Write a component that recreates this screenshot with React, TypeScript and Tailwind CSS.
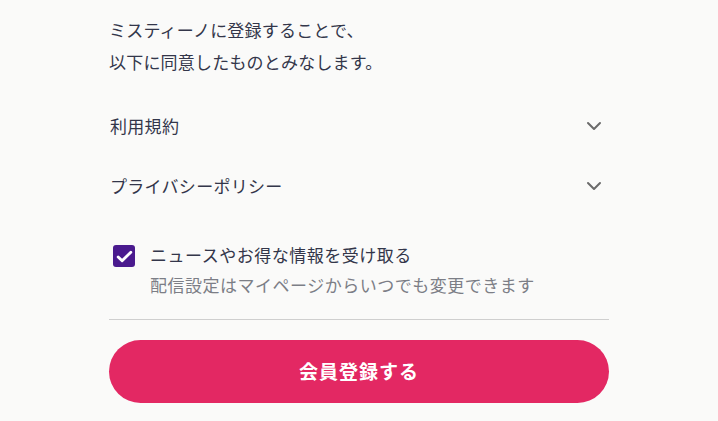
import { ChevronDown } from "lucide-react";

const font = { fontFamily: '"Noto Sans CJK JP", "Noto Sans", sans-serif' };

const terms = ["利用規約", "プライバシーポリシー"];

const App = () => {
  return (
    <div className="min-h-screen bg-[#fafaf9] text-[#33364a]" style={font}>
      <div className="mx-auto w-[500px] pt-[14px] pb-4">
        {/* Intro */}
        <p className="text-[17px] leading-[32px] tracking-[0.2px]">
          ミスティーノに登録することで、
          <br />
          以下に同意したものとみなします。
        </p>

        {/* Terms accordions */}
        <div className="mt-[18px]">
          {terms.map((t) => (
            <button
              key={t}
              className="flex h-[60px] w-full items-center justify-between pl-px pr-[3px] text-left"
            >
              <span className="text-[17px] tracking-[0.3px]">{t}</span>
              <ChevronDown size={24} strokeWidth={2} className="text-[#6b6b6b]" />
            </button>
          ))}
        </div>

        {/* Newsletter */}
        <label className="mt-[24px] flex gap-[15px] pl-[4px]">
          <span className="mt-[5px] flex h-[22px] w-[22px] shrink-0 items-center justify-center rounded-[3px] bg-[#4a1a8e]">
            <svg width="19" height="19" viewBox="0 0 24 24" fill="none" stroke="white" strokeWidth="3.6" strokeLinecap="round" strokeLinejoin="round">
              <path d="M4 12.5l5 5L20 6.5" />
            </svg>
          </span>
          <span className="flex flex-col">
            <span className="text-[17px] leading-[30px] tracking-[0.5px]">ニュースやお得な情報を受け取る</span>
            <span className="text-[17px] leading-[30px] tracking-[0.5px] text-[#7c7e86]">配信設定はマイページからいつでも変更できます</span>
          </span>
        </label>

        <div className="mt-[19px] h-px bg-[#cfcfcf]" />

        <button className="mt-[20px] flex h-[63px] w-full items-center justify-center rounded-full bg-[#e32863] text-[19px] font-bold tracking-[1px] text-white">
          会員登録する
        </button>
      </div>
    </div>
  );
};

export default App;
